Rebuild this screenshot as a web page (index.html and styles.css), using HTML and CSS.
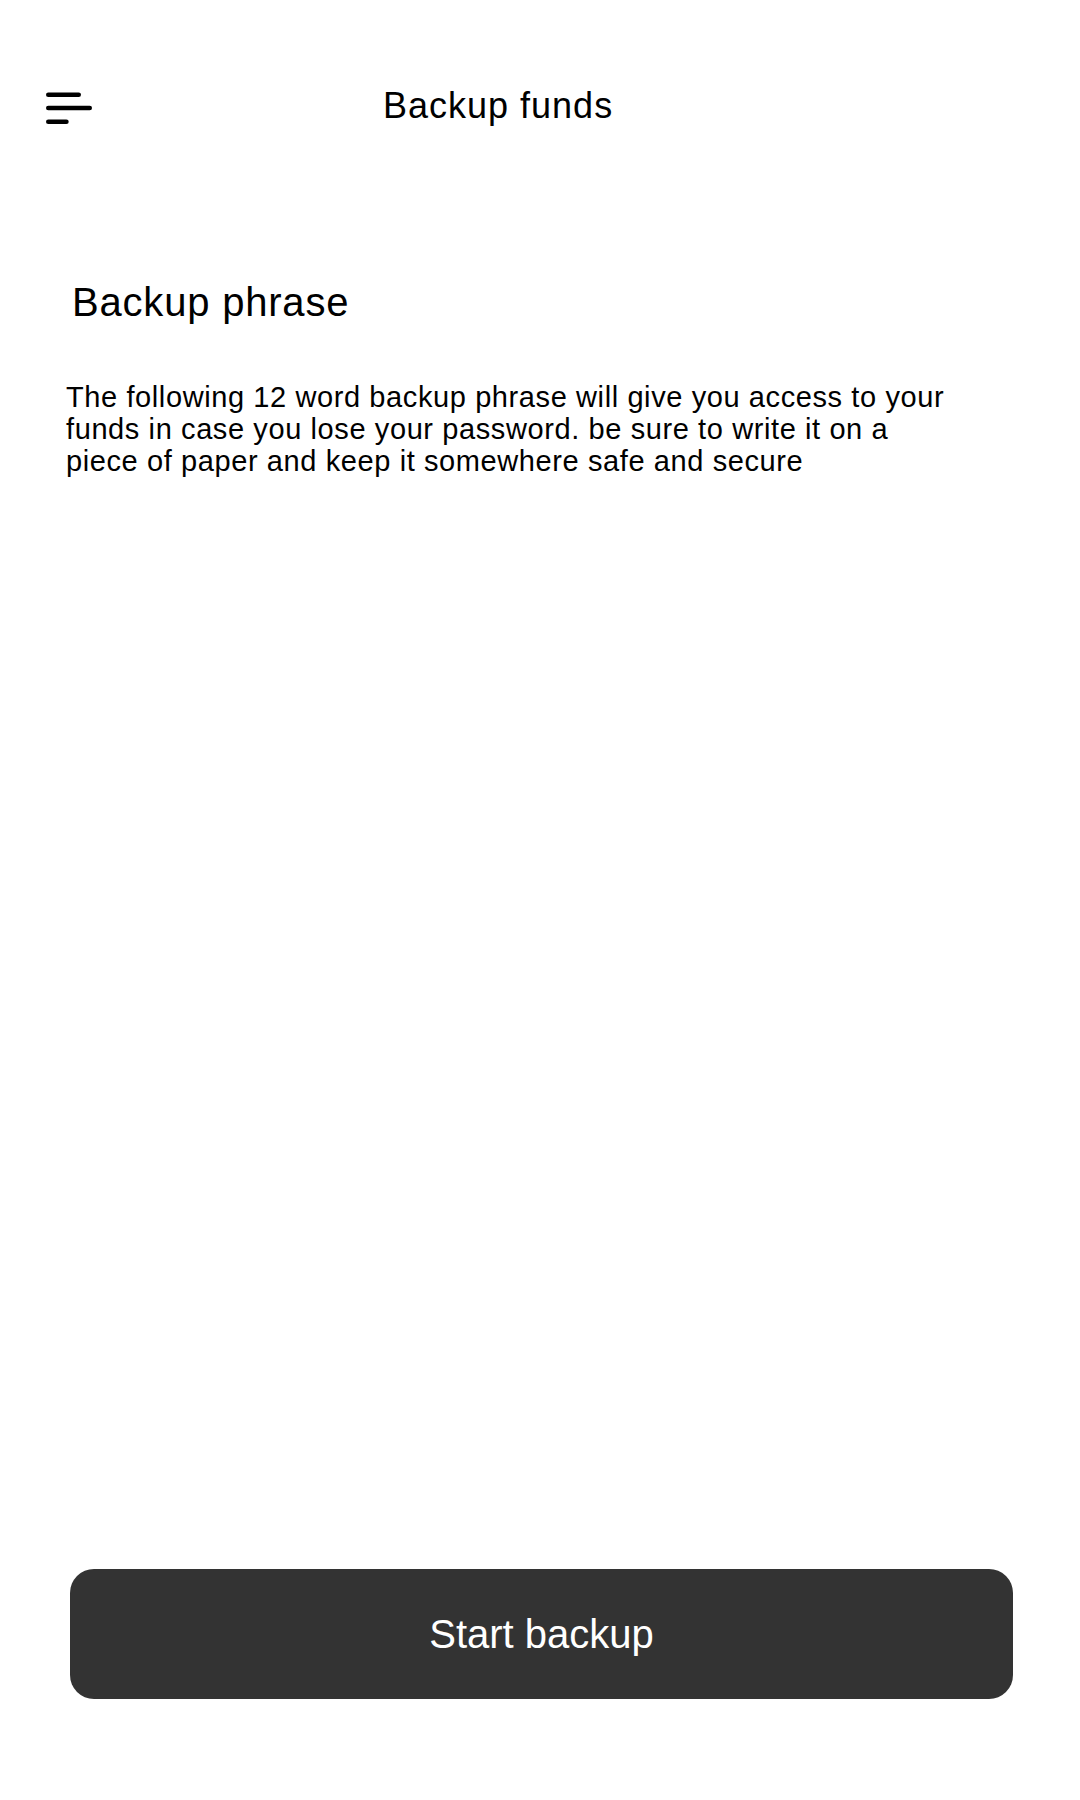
FILE: index.html
```html
<!DOCTYPE html>
<html lang="en">
<head>
<meta charset="utf-8">
<title>Backup funds</title>
<link rel="stylesheet" href="styles.css">
</head>
<body>
<div class="page">
  <header class="topbar">
    <svg class="menu-icon" width="46" height="32" viewBox="0 0 46 32" aria-hidden="true">
      <line x1="2.3" y1="2.7" x2="32.7" y2="2.7"/>
      <line x1="2.3" y1="16" x2="43.7" y2="16"/>
      <line x1="2.3" y1="29.7" x2="20.4" y2="29.7"/>
    </svg>
    <h1 class="title">Backup funds</h1>
  </header>
  <main class="content">
    <h2 class="heading">Backup phrase</h2>
    <p class="description">The following 12 word backup phrase will give you access to your funds in case you lose your password. be sure to write it on a piece of paper and keep it somewhere safe and secure</p>
  </main>
  <footer class="actions">
    <button class="primary-btn" type="button">Start backup</button>
  </footer>
</div>
</body>
</html>
```

FILE: styles.css
```css
* { box-sizing: border-box; }
html, body {
  margin: 0;
  padding: 0;
  background: #ffffff;
}
body {
  font-family: "Liberation Sans", Arial, sans-serif;
  color: #000000;
}
.page {
  display: flex;
  flex-direction: column;
  min-height: 1800px;
}
.topbar {
  display: flex;
  align-items: flex-start;
  padding: 86px 46px 0 46px;
}
.menu-icon {
  display: block;
  margin-top: 6px;
  flex: none;
}
.menu-icon line {
  stroke: #000000;
  stroke-width: 4.6;
  stroke-linecap: round;
}
.title {
  margin: 0 0 0 291px;
  font-size: 36px;
  line-height: 40px;
  font-weight: 400;
  letter-spacing: 1px;
}
.content {
  flex: 1;
  padding: 0 0 0 66px;
}
.heading {
  margin: 154px 0 0 6px;
  font-size: 40px;
  line-height: 44px;
  font-weight: 400;
  letter-spacing: 0.8px;
}
.description {
  margin: 57px 0 0 0;
  max-width: 890px;
  font-size: 29px;
  line-height: 32px;
  letter-spacing: 0.6px;
}
.actions {
  padding: 0 67px 101px 70px;
}
.primary-btn {
  display: block;
  width: 943px;
  height: 130px;
  border: none;
  border-radius: 24px;
  background: #333333;
  color: #ffffff;
  font-family: "Liberation Sans", Arial, sans-serif;
  font-size: 40px;
  padding: 0;
}
```
